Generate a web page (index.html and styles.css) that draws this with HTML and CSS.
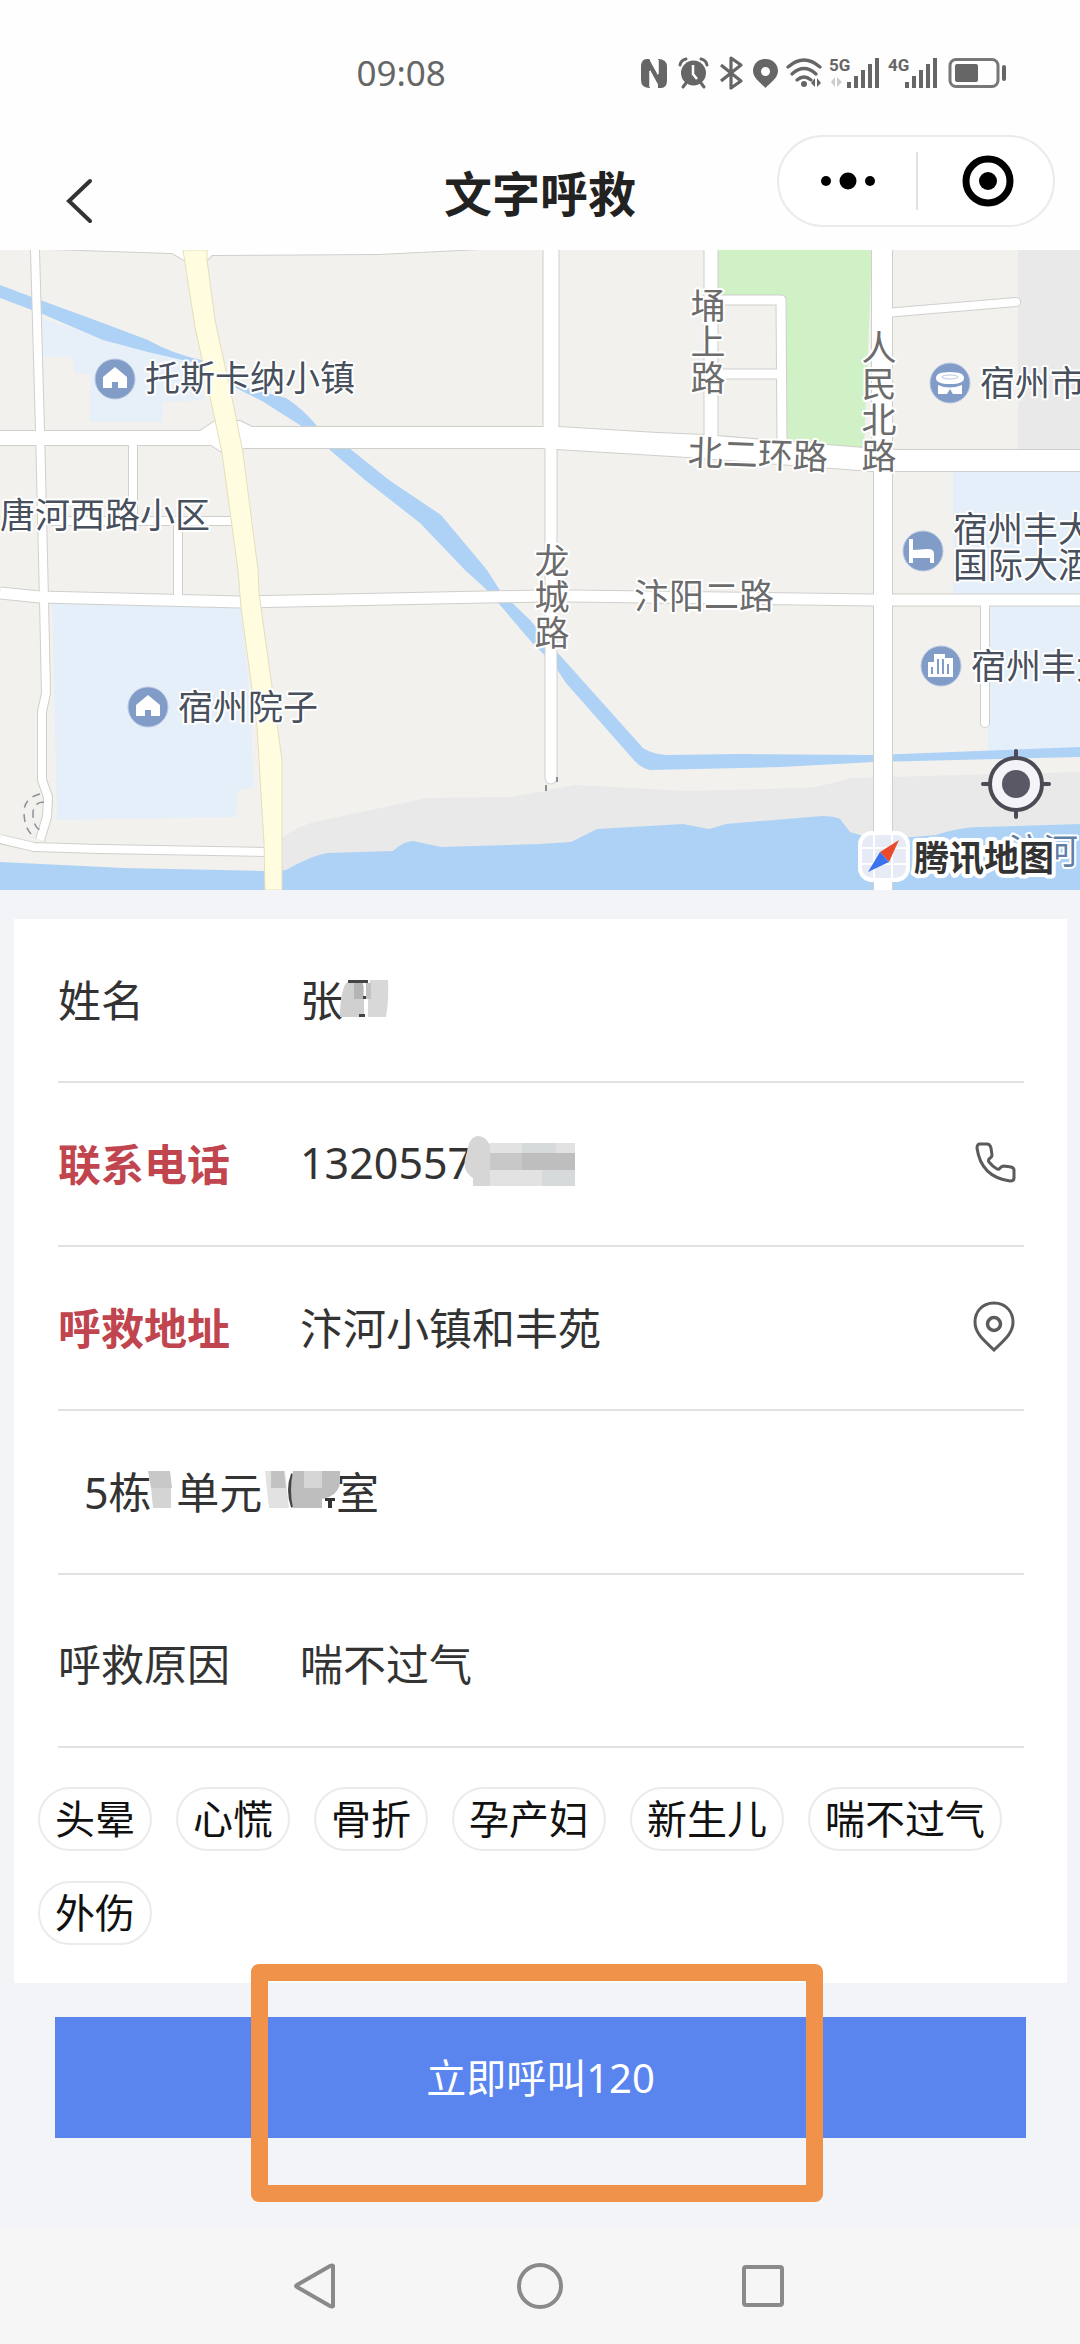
FILE: index.html
```html
<!DOCTYPE html>
<html lang="zh-CN">
<head>
<meta charset="utf-8">
<meta name="viewport" content="width=device-width, initial-scale=1">
<title>文字呼救</title>
<link rel="stylesheet" href="styles.css">
</head>
<body>
<div class="status-bar">
  <time class="clock">09:08</time>
  <svg class="status-icons" width="370" height="40" viewBox="638 53 370 40" aria-hidden="true">
    <g fill="#666">
      <path d="M647 59h2l1 1v28q-9 0-9-8V67q0-8 6-8z"/>
      <path d="M658 59q9 0 9 8v13q0 8-6 8h-3z"/>
      <path d="M649 59l11 20v9L649 68z"/>
      <path d="M650 71v16M658 60v14" stroke="#fff" stroke-width="1.500"/>
      <circle cx="693.500" cy="73" r="12.500"/>
      <path d="M680 65q1-5 6-6M707 65q-1-5-6-6M686 83l-3 4M701 83l3 4" fill="none" stroke="#666" stroke-width="3" stroke-linecap="round"/>
      <path d="M693 65v9l4 5" fill="none" stroke="#fff" stroke-width="2.500"/>
      <path d="M721 65l20 16-10 7V58l10 7-20 16" fill="none" stroke="#666" stroke-width="3.200" stroke-linejoin="round"/>
      <path d="M765.500 59c-8 0-12.500 6-12.500 12 0 7 8 12 12.500 17 4.500-5 12.500-10 12.500-17 0-6-4.500-12-12.500-12zm0 8a4 4 0 1 1 0 9 4 4 0 0 1 0-9z"/>
      <g fill="none" stroke="#666" stroke-width="3.200" stroke-linecap="round">
        <path d="M788 67q16-14 32 0M792 74q12-11 24 0M797 80q7-6 14 0"/>
      </g>
      <circle cx="804" cy="84" r="3"/>
      <path d="M811 83l4-5v9zM817 87v-9l4 5z"/>
      <text x="829" y="71" class="net">5G</text>
      <path d="M831 82l4-5v10zM837 87V77l5 5z" fill="#ccc"/>
      <path d="M847 82h4v6h-4zM854 76h4v12h-4zM861 70h4v18h-4zM868 64h4v24h-4zM875 58h4v30h-4z"/>
      <text x="888" y="71" class="net">4G</text>
      <path d="M905 82h4v6h-4zM912 76h4v12h-4zM919 70h4v18h-4zM926 64h4v24h-4zM933 58h4v30h-4z"/>
      <rect x="950" y="59.500" width="48" height="27" rx="6" fill="none" stroke="#777" stroke-width="3"/>
      <rect x="955" y="64" width="23" height="18" rx="2"/>
      <rect x="1002" y="65" width="4" height="16" rx="2"/>
    </g>
  </svg>
</div>

<header class="header">
  <button class="back" type="button" aria-label="返回">
    <svg width="32" height="48" viewBox="0 0 32 48"><path d="M28 4L7 24l21 20" fill="none" stroke="#333" stroke-width="4" stroke-linecap="round"/></svg>
  </button>
  <h1 class="title">文字呼救</h1>
  <div class="capsule">
    <button type="button" aria-label="更多">
      <svg width="60" height="20" viewBox="0 0 60 20"><circle cx="8" cy="10" r="5"/><circle cx="30" cy="10" r="8.500"/><circle cx="52" cy="10" r="5"/></svg>
    </button>
    <button type="button" aria-label="关闭">
      <svg width="52" height="52" viewBox="0 0 52 52"><circle cx="26" cy="26" r="22" fill="none" stroke="#000" stroke-width="7"/><circle cx="26" cy="26" r="9"/></svg>
    </button>
  </div>
</header>

<section class="map" aria-label="地图">
  <svg class="map-canvas" viewBox="0 250 1080 640" preserveAspectRatio="xMidYMid slice">
    <rect y="250" width="1080" height="640" fill="#f2f1ee"/>
    <path d="M41 318L103 338 191 362 205 400 163 402V422H90V374H75L72 357H41z" fill="#e7eff9"/>
    <path d="M52 602L241 607 250 700 254 787 238 790 236 817 57 820z" fill="#e5eff9"/>
    <path d="M953 471H1080V757H988V606H953z" fill="#e5eff9"/>
    <path d="M1018 250H1080V450H1018z" fill="#e9e9e9"/>
    <path d="M717 250H872L864 450 717 438z" fill="#cff1c5"/>
    <path d="M717 297H778V440H717z" fill="#f2f1ee"/>
    <path d="M282 838Q300 824 324 820L427 798 510 797 545 791 574 785 688 791 805 788Q825 786 850 778L1080 772V890H282z" fill="#e9e9e9"/>
    <g fill="#aed2f5">
      <path d="M0 862L124 868 262 871 286 870Q308 857 327 853L393 851Q404 841 413 841L441 847 540 844 571 842 597 829 683 824 709 829 726 824 822 816Q834 816 840 819L850 832 877 840 936 835Q960 827 981 827L1080 824V890H0z"/>
      <path d="M0 285L40 300 103 323 148 340Q170 353 205 361L241 386 286 398Q303 409 318 427L349 448 389 480 441 515 487 570 501 592 530 620 557 652 643 748Q652 754 667 755L740 754 874 755 1080 747V757L874 762 781 767 650 770Q640 768 632 758L566 683 552 662 534 645 489 592 465 570 420 523 365 480 303 427 262 401 228 384 191 362 148 352 103 340 40 313 0 298z"/>
    </g>
    <g fill="none" stroke-linejoin="round">
      <g stroke="#cfcfcc">
        <path d="M35 250L40 430 44 600 46 693 42 712V780L48 797 47 817 40 840" stroke-width="10"/>
        <path d="M133 440V521M178 521V600M40 521H240" stroke-width="10"/>
        <path d="M0 593L40 597 241 602 540 596H570L874 600 1080 600" stroke-width="13"/>
        <path d="M0 839L34 847 100 849 264 852" stroke-width="10"/>
        <path d="M551 250V440" stroke-width="17"/>
        <path d="M551 440V778" stroke-width="13" stroke-linecap="round"/>
        <path d="M711 250V440" stroke-width="15"/>
        <path d="M711 300H781L782 445M711 374H780" stroke-width="11"/>
        <path d="M882 250V450" stroke-width="22"/>
        <path d="M883 450V890" stroke-width="20"/>
        <path d="M885 313L1016 302M985 600V723" stroke-width="10" stroke-linecap="round"/>
        <path d="M0 431H200L215 421H240L252 427H559L657 433 704 435 864 448 898 450H1080V471H872L688 457 540 448H245L222 452 211 445H0z" stroke-width="2"/>
        <path d="M50 249L172 253 184 260H207L212 255 378 254 480 249" stroke-width="2"/>
      </g>
      <g stroke="#fff">
        <path d="M35 250L40 430 44 600 46 693 42 712V780L48 797 47 817 40 840" stroke-width="8"/>
        <path d="M133 440V521M178 521V600M40 521H240" stroke-width="8"/>
        <path d="M0 593L40 597 241 602 540 596H570L874 600 1080 600" stroke-width="11"/>
        <path d="M0 839L34 847 100 849 264 852" stroke-width="8"/>
        <path d="M551 250V440" stroke-width="15"/>
        <path d="M551 440V778" stroke-width="11" stroke-linecap="round"/>
        <path d="M711 250V440" stroke-width="13"/>
        <path d="M711 300H781L782 445M711 374H780" stroke-width="9"/>
        <path d="M882 250V460" stroke-width="20"/>
        <path d="M883 440V890" stroke-width="18"/>
        <path d="M885 313L1016 302M985 600V723" stroke-width="8" stroke-linecap="round"/>
      </g>
    </g>
    <path d="M0 431H200L215 421H240L252 427H559L657 433 704 435 864 448 898 450H1080V471H872L688 457 540 448H245L222 452 211 445H0zM50 249L172 253 184 260H207L212 255 378 254 480 249z" fill="#fff"/>
    <path d="M183 250L195 327 215 420 222 453 238 570 241 607 257 727 264 843 265 890H282V760L272 687 259 593 258 570 243 453 236 417 215 320 207 260V250z" fill="#fffce0" stroke="#e3dfbd"/>
    <g fill="none" stroke="#8b8f96" stroke-dasharray="8 6">
      <path d="M40 794Q24 798 24 812T31 834M44 802Q33 802 33 814T40 830" stroke-width="1.500"/>
      <path d="M546 785v6M557 777v5" stroke-width="2"/>
    </g>
    <g>
      <g fill="#829cc8" stroke="#b9c8e2"><circle cx="115" cy="379" r="20"/><circle cx="148" cy="707" r="20"/><circle cx="950" cy="383" r="20"/><circle cx="923" cy="551" r="20"/><circle cx="941" cy="666" r="20"/></g>
      <g fill="#fff">
        <path d="M115 367l12 10v11h-9v-6h-6v6h-9v-11z"/>
        <path d="M148 695l12 10v11h-9v-6h-6v6h-9v-11z"/>
        <path d="M936 378q0-6 14-6t14 6-14 6-14-6zM938 385q11 5 24 0v9h-9l-3-5-3 5h-9z"/>
        <path d="M909 539h4v11l15-1q6 0 6 5v9h-4v-5h-17v5h-4z"/>
        <path d="M928 662h6v-8h11v4h8v19h-25z"/>
      </g>
      <ellipse cx="950" cy="377" rx="8" ry="2" fill="none" stroke="#b9c8e2"/>
      <path d="M932 667v7M938 659v15M943 659v15M948 664v10" stroke="#829cc8" stroke-width="2"/>
    </g>
    <g class="place">
      <text x="145" y="391">托斯卡纳小镇</text>
      <text x="0" y="528">唐河西路小区</text>
      <text x="178" y="720">宿州院子</text>
      <text x="980" y="396">宿州市</text>
      <text x="953" y="542">宿州丰大</text>
      <text x="953" y="578">国际大酒</text>
      <text x="971" y="679">宿州丰大</text>
      <text x="1008" y="864" class="river">汴河</text>
    </g>
    <g class="road">
      <text x="688" y="465" transform="rotate(2 690 452)">北二环路</text>
      <text x="634" y="609">汴阳二路</text>
      <text text-anchor="middle"><tspan x="708" y="319">埇</tspan><tspan x="708" y="355">上</tspan><tspan x="708" y="391">路</tspan></text>
      <text text-anchor="middle"><tspan x="879" y="361">人</tspan><tspan x="879" y="397">民</tspan><tspan x="879" y="433">北</tspan><tspan x="879" y="469">路</tspan></text>
      <text text-anchor="middle"><tspan x="552" y="574">龙</tspan><tspan x="552" y="610">城</tspan><tspan x="552" y="646">路</tspan></text>
    </g>
    <rect x="860" y="833" width="48" height="47" rx="12" fill="#e6ebf5" stroke="#fff" stroke-width="4"/>
    <path d="M874 835v43M892 835v43M862 848h44M862 864h44" stroke="#fff" stroke-width="2"/>
    <path d="M899 840l-10 22-9-10z" fill="#e94b2c"/>
    <path d="M868 872l12-20 9 10z" fill="#3a72ee"/>
    <text class="brand" x="914" y="871">腾讯地图</text>
  </svg>
  <button class="locate" type="button" aria-label="定位">
    <svg width="72" height="72" viewBox="0 0 72 72"><circle cx="36" cy="36" r="26" fill="#f4f3f8"/><g fill="none" stroke="#4b4a55" stroke-width="4" stroke-linecap="round"><circle cx="36" cy="36" r="26"/><path d="M36 3v7M36 62v7M3 36h7M62 36h7"/></g><circle cx="36" cy="36" r="14" fill="#5a5865"/></svg>
  </button>
</section>

<main class="main">
  <form class="form" id="rescue">
    <div class="row">
      <label for="name">姓名</label>
      <div class="field">
        <input id="name" type="text" value="张">
        <svg class="mosaic" width="100" height="60" viewBox="0 0 100 60" aria-hidden="true">
          <path d="M40 49q0-24 6-34l10-3 8 6v31z" fill="#d0d0d0"/><path d="M64 12h9v37h-9z" fill="#fff"/><path d="M48 12h20v3H48zM62 28h6v3h-6zM59 46h6v3h-6z" fill="#444"/><path d="M54 15h9v16h-9z" fill="#b5b5b5"/><path d="M70 12h18q1 20-2 37H68V31z" fill="#d8d8d8"/><path d="M66 15h5v16h-5z" fill="#c2c2c2"/>
        </svg>
      </div>
    </div>
    <div class="row">
      <label class="required" for="phone">联系电话</label>
      <div class="field">
        <input id="phone" type="tel" value="1320557">
        <svg class="mosaic" width="300" height="60" viewBox="0 0 300 60" aria-hidden="true">
          <path d="M167 20q2-16 12-16 7 1 11 9V54h-17v-8q-13-8-6-26z" fill="#d6d6d6"/><path d="M190 11h85v43h-85z" fill="#e2e2e2"/><path d="M190 21h85v17h-85z" fill="#bebebe"/><path d="M190 21h32v17h-32z" fill="#c8c8c8"/><path d="M222 11h34v10h-34zM242 38h33v16h-33z" fill="#d6dada"/>
        </svg>
      </div>
      <button class="icon-button" type="button" aria-label="拨打电话">
        <svg width="44" height="52" viewBox="0 0 44 52"><path d="M7 8h8q3 0 4 4l1 7q0 2-3 4-1 2 0 3 4 5 8 7 2 1 3-1 2-2 4-2l7 1q3 1 3 3v8q0 3-4 3Q9 41 5 12q0-3 2-4z" fill="none" stroke="#5b5b5b" stroke-width="3"/></svg>
      </button>
    </div>
    <div class="row">
      <label class="required" for="address">呼救地址</label>
      <div class="field"><input id="address" type="text" value="汴河小镇和丰苑"></div>
      <button class="icon-button" type="button" aria-label="选择位置">
        <svg width="44" height="52" viewBox="0 0 44 52"><path d="M22 3C9 3 3 13 3 22c0 12 10 19 19 28 9-9 19-16 19-28C41 13 35 3 22 3z" fill="none" stroke="#5b5b5b" stroke-width="3"/><circle cx="22" cy="24" r="6.500" fill="none" stroke="#5b5b5b" stroke-width="3.500"/></svg>
      </button>
    </div>
    <div class="row detail">
      <div class="field">
        <input id="room" type="text" aria-label="门牌号" value="5栋&#8199;单元&#8199;&#8199;&#8199;室">
        <svg class="mosaic" width="300" height="60" viewBox="0 0 300 60" aria-hidden="true">
          <path d="M64 11h22l2 17H67z" fill="#c8c8c8"/><path d="M67 28h20v20H69z" fill="#d4d4d4"/><path d="M181 11h20l4 37h-20z" fill="#e2e2e2"/><path d="M187 11h13l2 17h-15z" fill="#c2c2c2"/><path d="M209 14q-6 16 0 33" fill="none" stroke="#444" stroke-width="4"/><path d="M209 11h47v12q-2 13-18 16v9h-29q-4-17 0-37z" fill="#bebebe"/><path d="M220 11h18v17h-18z" fill="#d6d6d6"/><path d="M241 38h10v3h-3v7h-4v-7h-3z" fill="#333"/>
        </svg>
      </div>
    </div>
    <div class="row reason">
      <label for="reason">呼救原因</label>
      <div class="field"><input id="reason" type="text" value="喘不过气"></div>
    </div>
    <div class="chips">
      <button type="button">头晕</button>
      <button type="button">心慌</button>
      <button type="button">骨折</button>
      <button type="button">孕产妇</button>
      <button type="button">新生儿</button>
      <button type="button">喘不过气</button>
      <button type="button">外伤</button>
    </div>
  </form>
  <div class="action">
    <button class="call" type="submit" form="rescue">立即呼叫120</button>
    <div class="highlight"></div>
  </div>
</main>

<nav class="nav" aria-label="系统导航">
  <button type="button" aria-label="返回"><svg width="48" height="48" viewBox="0 0 48 48"><path d="M40 4v40q-1 1-3 0L4 25q-2-1 0-2L37 4q2-1 3 0z"/></svg></button>
  <button type="button" aria-label="主页"><svg width="48" height="48" viewBox="0 0 48 48"><circle cx="24" cy="24" r="21"/></svg></button>
  <button type="button" aria-label="最近任务"><svg width="48" height="48" viewBox="0 0 48 48"><rect x="5" y="5" width="38" height="38" rx="2"/></svg></button>
</nav>
</body>
</html>
```
FILE: styles.css
```css
* {
  box-sizing: border-box;
}

body {
  margin: 0;
  min-height: 100vh;
  display: flex;
  flex-direction: column;
  background: #f2f4f7;
  color: #333;
  font-family: "Noto Sans", "Noto Sans CJK SC", sans-serif;
  font-size: 43px;
}

button,
input {
  margin: 0;
  padding: 0;
  border: 0;
  background: none;
  color: inherit;
  font: inherit;
}

svg {
  display: block;
}

/* System status bar */
.status-bar {
  display: flex;
  align-items: center;
  justify-content: space-between;
  height: 98px;
  padding: 48px 72px 0 33%;
  background: #fefefe;
}

.clock {
  color: #666;
  font-size: 35px;
  line-height: 50px;
}

.net {
  font: bold 17px Roboto, sans-serif;
}

/* Page header */
.header {
  position: relative;
  display: grid;
  grid-template-columns: 1fr auto 1fr;
  align-items: center;
  height: 152px;
  padding: 40px 62px 0;
  background: #fefefe;
}

.back {
  justify-self: start;
  padding-top: 14px;
}

.title {
  margin: 0;
  color: #222;
  font-size: 48px;
  line-height: 72px;
}

.capsule {
  position: absolute;
  top: 37px;
  right: 25px;
  display: grid;
  grid-template-columns: 1fr 1fr;
  align-items: center;
  width: 278px;
  height: 92px;
  border: 2px solid #ebebeb;
  border-radius: 46px;
  background: #fff;
}

.capsule button {
  display: flex;
  align-items: center;
  justify-content: center;
  height: 58px;
}

.capsule button + button {
  padding-left: 4px;
  border-left: 2px solid #e2e2e2;
}

/* Map */
.map {
  position: relative;
  height: 640px;
}

.map-canvas {
  width: 100%;
  height: 100%;
}

.place,
.road {
  font-size: 35px;
  stroke: #fff;
  stroke-width: 4px;
  stroke-linejoin: round;
  paint-order: stroke;
}

.place {
  fill: #47505c;
}

.road {
  fill: #6c6c6c;
}

.river {
  fill: #5f7fa8;
}

.brand {
  fill: #333;
  font-size: 35px;
  font-weight: bold;
  stroke: #fff;
  stroke-width: 8px;
  stroke-linejoin: round;
  paint-order: stroke;
}

.locate {
  position: absolute;
  right: 28px;
  bottom: 70px;
}

/* Rescue form */
.main {
  padding: 29px 13px 0 14px;
}

.form {
  padding-bottom: 38px;
  background: #fff;
}

.row {
  display: flex;
  align-items: center;
  height: 164px;
  margin: 0 43px 0 44px;
  padding-bottom: 4px;
  border-bottom: 2px solid #e2e2e2;
}

.row label {
  width: 242px;
}

.row .required {
  color: #c0454f;
  font-weight: bold;
}

.detail {
  padding-left: 26px;
}

.reason {
  height: 173px;
  padding: 4px 0 0;
}

.field {
  position: relative;
  flex: 1;
}

.field input {
  display: block;
  width: 100%;
  height: 60px;
  outline: 0;
}

.mosaic {
  position: absolute;
  top: 0;
  left: 0;
}

.icon-button {
  padding-right: 8px;
}

.chips {
  display: flex;
  flex-wrap: wrap;
  gap: 30px 24px;
  padding: 39px 24px 0;
}

.chips button {
  height: 64px;
  padding: 0 15px;
  border: 2px solid #ebebeb;
  border-radius: 32px;
  color: #111;
  font-size: 40px;
  line-height: 60px;
}

/* Call button and the marker drawn round it */
.action {
  position: relative;
  padding: 34px 41px 0;
}

.call {
  display: block;
  width: 100%;
  height: 121px;
  padding-bottom: 4px;
  background: #5a85ef;
  color: #fff;
  font-size: 40px;
}

.highlight {
  position: absolute;
  top: -19px;
  right: 244px;
  bottom: -64px;
  left: 237px;
  border: 17px solid #f0924a;
  border-radius: 8px;
  pointer-events: none;
}

/* System navigation */
.nav {
  display: flex;
  align-items: center;
  justify-content: center;
  gap: 175px;
  height: 117px;
  margin-top: auto;
  background: #f6f6f6;
}

.nav svg {
  fill: none;
  stroke: #8a8a8a;
  stroke-width: 4px;
}
```
